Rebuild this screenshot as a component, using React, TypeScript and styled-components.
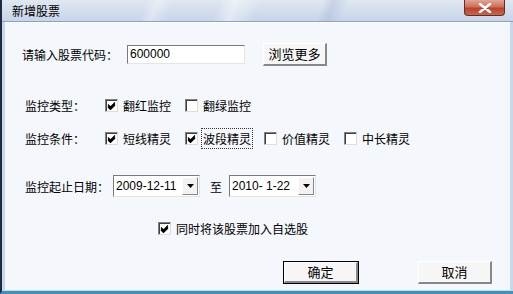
import styled, { createGlobalStyle } from 'styled-components';

const Global = createGlobalStyle`
  html, body { margin: 0; padding: 0; background: #f4f7fc; }
  body { font-family: "Noto Sans CJK SC", "Liberation Sans", sans-serif; font-size: 12px; color: #000; }
`;

const Window = styled.div`
  width: 513px;
  height: 294px;
  box-sizing: border-box;
  display: flex;
  flex-direction: column;
  background: #c9d7ea;
  border-left: 2px solid #1d2b44;
  border-bottom: 3px solid #3e93b8;
  padding: 0 3px 1px 3px;
  overflow: hidden;
`;

const TitleBar = styled.div`
  height: 21px;
  flex: none;
  display: flex;
  align-items: center;
  justify-content: space-between;
  padding-left: 10px;
  margin: 0 -3px 0 -3px;
  background:
    linear-gradient(110deg, transparent 0 28%, rgba(255,255,255,0.35) 30%, transparent 33% 42%, rgba(255,255,255,0.45) 45%, transparent 50% 62%, rgba(150,170,200,0.3) 64%, transparent 67%),
    linear-gradient(180deg, #dfe7f2 0%, #c8d5e8 100%);
  border-bottom: 1px solid #8aa3c4;
`;

const Title = styled.span`
  font-size: 12px;
  line-height: 1;
`;

const CloseBtn = styled.div`
  width: 41px;
  height: 16px;
  margin-right: 8px;
  align-self: flex-start;
  box-sizing: border-box;
  border: 1px solid #6b2a20;
  border-top: none;
  border-radius: 0 0 4px 4px;
  background: linear-gradient(180deg, #e0a595 0%, #cf6f5a 45%, #b8432e 55%, #c9664c 100%);
  display: flex;
  align-items: center;
  justify-content: center;
`;

const Client = styled.div`
  flex: 1;
  background: #f4f7fc;
  border-top: 1px solid #fff;
  display: flex;
  flex-direction: column;
  padding-left: 17px;
`;

const Row = styled.div<{ $top: number; $h: number; $indent?: number }>`
  display: flex;
  align-items: center;
  height: ${p => p.$h}px;
  margin-top: ${p => p.$top}px;
  padding-left: ${p => p.$indent ?? 0}px;
`;

const Label = styled.span<{ $w?: number }>`
  width: ${p => (p.$w ? p.$w + 'px' : 'auto')};
  flex: none;
  white-space: nowrap;
`;

const TextInput = styled.div`
  width: 118px;
  height: 19px;
  box-sizing: border-box;
  background: #fff;
  border-top: 1px solid #7a7a7a;
  border-left: 1px solid #7a7a7a;
  border-right: 1px solid #e4e4e4;
  border-bottom: 1px solid #e4e4e4;
  font-family: "Liberation Sans", sans-serif;
  font-size: 12px;
  line-height: 17px;
  padding-left: 2px;
`;

const Button = styled.div<{ $w: number; $default?: boolean }>`
  width: ${p => p.$w}px;
  height: ${p => (p.$default ? 21 : 23)}px;
  box-sizing: border-box;
  background: #f6f6f6;
  border-top: 1px solid #fff;
  border-left: 1px solid #fff;
  border-right: 2px solid #888;
  border-bottom: 2px solid #888;
  outline: ${p => (p.$default ? '1px solid #000' : 'none')};
  display: flex;
  align-items: center;
  justify-content: center;
  font-size: 13px;
`;

const CheckItem = styled.label<{ $w?: number }>`
  display: flex;
  align-items: center;
  width: ${p => (p.$w ? p.$w + 'px' : 'auto')};
  flex: none;
`;

const Box = styled.span`
  width: 13px;
  height: 13px;
  box-sizing: border-box;
  background: #fff;
  border-top: 1px solid #808080;
  border-left: 1px solid #808080;
  border-right: 1px solid #dcdcdc;
  border-bottom: 1px solid #dcdcdc;
  box-shadow: inset 1px 1px 0 #404040;
  display: flex;
  align-items: center;
  justify-content: center;
  margin-right: 4px;
  flex: none;
`;

const CheckText = styled.span<{ $focus?: boolean }>`
  padding: 1px 1px;
  outline: ${p => (p.$focus ? '1px dotted #333' : 'none')};
  white-space: nowrap;
`;

const Combo = styled.div`
  width: 87px;
  height: 22px;
  box-sizing: border-box;
  background: #fff;
  border-top: 1px solid #7a7a7a;
  border-left: 1px solid #7a7a7a;
  border-right: 1px solid #e4e4e4;
  border-bottom: 1px solid #e4e4e4;
  display: flex;
  align-items: stretch;
`;

const ComboText = styled.span`
  flex: 1;
  font-family: "Liberation Sans", sans-serif;
  font-size: 12px;
  line-height: 20px;
  padding-left: 2px;
  white-space: pre;
`;

const ComboArrow = styled.span`
  width: 16px;
  margin: 1px;
  box-sizing: border-box;
  background: #f2f2f2;
  border-top: 1px solid #fff;
  border-left: 1px solid #fff;
  border-right: 1px solid #888;
  border-bottom: 1px solid #888;
  display: flex;
  align-items: center;
  justify-content: center;
`;

const Spacer = styled.span<{ $w: number }>`
  width: ${p => p.$w}px;
  flex: none;
`;

function Check(props: { text: string; checked?: boolean; width?: number; focus?: boolean }) {
  return (
    <CheckItem $w={props.width}>
      <Box>
        {props.checked && (
          <svg width="9" height="9" viewBox="0 0 9 9">
            <path d="M1 3.5 L3.5 6 L8 1.5 M1 4.8 L3.5 7.3 L8 2.8 M1 6 L3.5 8.5 L8 4" stroke="#000" strokeWidth="1.1" fill="none" />
          </svg>
        )}
      </Box>
      <CheckText $focus={props.focus}>{props.text}</CheckText>
    </CheckItem>
  );
}

function DateBox(props: { value: string }) {
  return (
    <Combo>
      <ComboText>{props.value}</ComboText>
      <ComboArrow>
        <svg width="7" height="4" viewBox="0 0 7 4">
          <path d="M0 0 H7 L3.5 4 Z" fill="#000" />
        </svg>
      </ComboArrow>
    </Combo>
  );
}

export default function App() {
  return (
    <>
      <Global />
      <Window>
        <TitleBar>
          <Title>新增股票</Title>
          <CloseBtn>
            <svg width="14" height="10" viewBox="0 0 14 10">
              <path d="M2 1 L12 9 M12 1 L2 9" stroke="#fff" strokeWidth="2.6" strokeLinecap="round" />
            </svg>
          </CloseBtn>
        </TitleBar>
        <Client>
          <Row $top={19} $h={24}>
            <Label $w={105}>请输入股票代码：</Label>
            <TextInput>600000</TextInput>
            <Spacer $w={18} />
            <Button $w={64}>浏览更多</Button>
          </Row>
          <Row $top={29} $h={20} $indent={3}>
            <Label $w={80}>监控类型：</Label>
            <Check text="翻红监控" checked width={80} />
            <Check text="翻绿监控" />
          </Row>
          <Row $top={13} $h={20} $indent={3}>
            <Label $w={80}>监控条件：</Label>
            <Check text="短线精灵" checked width={80} />
            <Check text="波段精灵" checked width={79} focus />
            <Check text="价值精灵" width={80} />
            <Check text="中长精灵" />
          </Row>
          <Row $top={27} $h={22} $indent={3}>
            <Label $w={88}>监控起止日期：</Label>
            <DateBox value="2009-12-11" />
            <Spacer $w={10} />
            <Label $w={19}>至</Label>
            <DateBox value="2010- 1-22" />
          </Row>
          <Row $top={22} $h={18} $indent={136}>
            <Check text="同时将该股票加入自选股" checked />
          </Row>
          <Row $top={24} $h={22} $indent={262}>
            <Button $w={74} $default>确定</Button>
            <Spacer $w={60} />
            <Button $w={74}>取消</Button>
          </Row>
        </Client>
      </Window>
    </>
  );
}
